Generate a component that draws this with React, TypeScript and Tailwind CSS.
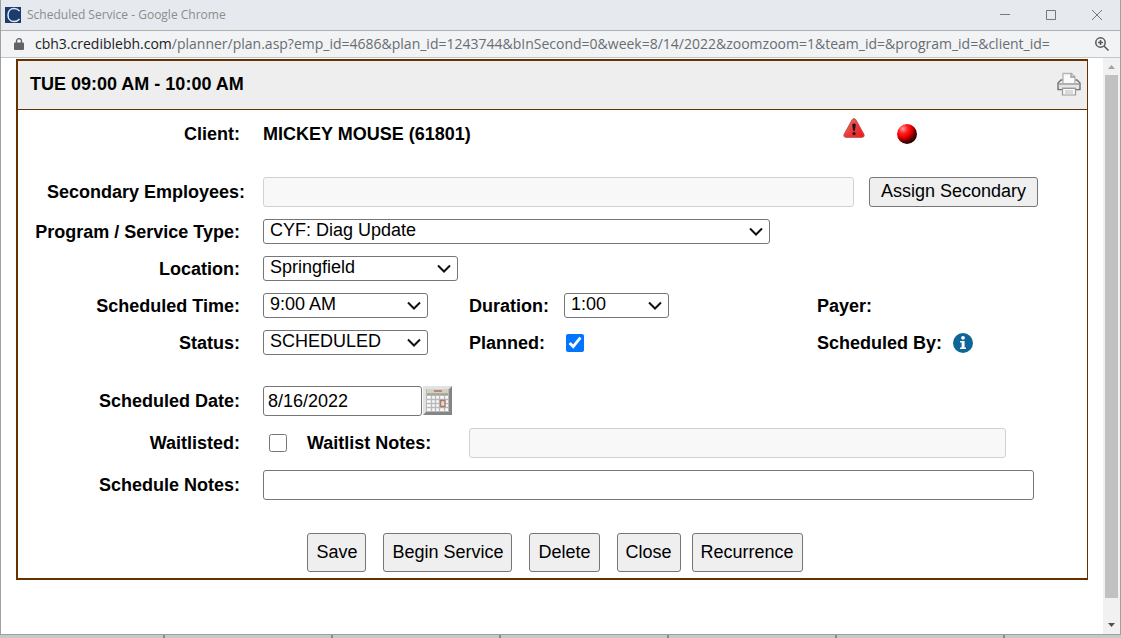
import { useState } from "react";
import type { ReactNode } from "react";

const TIMES = ["8:00 AM", "8:30 AM", "9:00 AM", "9:30 AM", "10:00 AM"];
const DURATIONS = ["0:30", "1:00", "1:30", "2:00"];
const STATUSES = ["SCHEDULED", "CANCELLED", "COMPLETED"];
const ACTIONS = [
  { label: "Save", className: "mr-[17px]" },
  { label: "Begin Service", className: "mr-[17px]" },
  { label: "Delete", className: "mr-[17px]" },
  { label: "Close", className: "mr-[11px]" },
  { label: "Recurrence", className: "" },
];

const fieldClass = "h-[30px] min-w-0 rounded-[3px] border border-[#767676] bg-white px-1 text-lg";
const disabledFieldClass = "h-[30px] min-w-0 rounded-[3px] border border-[#d1d1d1] bg-[#f8f8f8] px-1 text-lg";
const buttonClass = "rounded-[3px] border border-[#767676] bg-[#efefef] px-2 pb-0.5 text-lg leading-6 whitespace-nowrap";

function Row({ label, htmlFor, wide, children }: { label: string; htmlFor?: string; wide?: boolean; children?: ReactNode }) {
  return (
    <div className="flex items-center">
      <label
        htmlFor={htmlFor}
        className={`w-[245px] shrink-0 text-right font-bold leading-6 whitespace-nowrap ${wide ? "pr-[18px]" : "pr-[23px]"}`}
      >
        {label}
      </label>
      <div className="flex min-w-0 flex-1 items-center">{children}</div>
    </div>
  );
}

function Select({ id, value, options, className }: { id: string; value: string; options: string[]; className: string }) {
  const [current, setCurrent] = useState(value);
  return (
    <div className={`relative ${className}`}>
      <select
        id={id}
        value={current}
        onChange={(e) => setCurrent(e.target.value)}
        className="block h-[25px] w-full appearance-none rounded-[3px] border border-[#767676] bg-white pr-6 pb-0.5 pl-1.5 text-lg leading-[21px]"
      >
        {options.map((o) => (
          <option key={o}>{o}</option>
        ))}
      </select>
      <svg className="pointer-events-none absolute top-2 right-[7px]" width="14" height="10" viewBox="0 0 14 10" fill="none" stroke="#111" strokeWidth="2">
        <path d="M1 1.5 7 7.5 13 1.5" />
      </svg>
    </div>
  );
}

function PrintIcon() {
  return (
    <svg width="24" height="24" viewBox="0 0 24 24" fill="none">
      <path d="M6 11V1.5h8.5L18 5v6" fill="#fafafa" stroke="#b5b5b5" strokeWidth="1.3" />
      <path d="M14 1.5V5h4" stroke="#999" strokeWidth="1.3" />
      <path d="M5.5 8H4L1 11v6.5h4M18.5 8H20l3 3v6.5h-4" stroke="#707070" strokeWidth="1.4" />
      <path d="M2 12h20" stroke="#9a9a9a" strokeWidth="1.5" />
      <path d="M2 13h20v4H2z" fill="#e6e6e6" />
      <path d="M5 16.5h14" stroke="#666" strokeWidth="1.5" />
      <path d="M5.5 16.5h13V23h-13z" fill="#fafafa" stroke="#999" strokeWidth="1.2" />
      <path d="M8 19h8M8 21h8" stroke="#bbb" />
    </svg>
  );
}

function AlertIcon() {
  return (
    <svg width="22" height="20" viewBox="0 0 22 20">
      <defs>
        <linearGradient id="alert" x1="0" y1="0" x2="1" y2="1">
          <stop offset="0" stopColor="#e98383" />
          <stop offset="0.5" stopColor="#ee3b3b" />
          <stop offset="1" stopColor="#f01414" />
        </linearGradient>
      </defs>
      <path d="M9.3 1.5Q11-.4 12.7 1.5L21 16.5Q21.8 19.3 19 19.3H3Q.2 19.3 1 16.5Z" fill="url(#alert)" stroke="#c74747" />
      <path d="M9.2 6.2Q11 5 12.8 6.2L11.9 12.8h-1.8Z" fill="#161616" />
      <circle cx="11" cy="15.6" r="1.6" fill="#161616" />
    </svg>
  );
}

function RedBall() {
  return (
    <svg width="20" height="20" viewBox="0 0 20 20">
      <defs>
        <radialGradient id="ball" cx="0.3" cy="0.24" r="0.8">
          <stop offset="0" stopColor="#ff9a9a" />
          <stop offset="0.3" stopColor="#ff2020" />
          <stop offset="0.52" stopColor="#f00000" />
          <stop offset="0.78" stopColor="#6a0000" />
          <stop offset="1" stopColor="#200000" />
        </radialGradient>
      </defs>
      <circle cx="10" cy="10" r="10" fill="url(#ball)" />
    </svg>
  );
}

function InfoIcon() {
  return (
    <svg width="20" height="20" viewBox="0 0 20 20">
      <circle cx="10" cy="10" r="10" fill="#0e6598" />
      <circle cx="10" cy="4.8" r="1.9" fill="#fff" />
      <path d="M7 8h4.6v6.4H13V16H7v-1.6h1.6V9.5H7Z" fill="#fff" />
    </svg>
  );
}

function CalendarIcon() {
  return (
    <svg width="29" height="29" viewBox="0 0 29 29">
      <path d="M0 0h29v29H0z" fill="#858585" />
      <path d="M0 0h29l-3 3v23H3l-3 3z" fill="#e2e2e2" />
      <path d="M3 3h23v23H3z" fill="#b9b9b9" />
      <path d="M4 3h21v5H4z" fill="#d3d0c2" />
      <path d="M11 4h8v2h-8z" fill="#b48c75" />
      <path d="M4 8h21" stroke="#8b8b83" />
      <path d="M4 10h21v15H4z" fill="#fafafa" />
      <path d="M8.5 9v17M12.5 9v17M16.5 9v17M21.5 9v17M4 13.5h21M4 17.5h21M4 21.5h21" stroke="#b9b9b9" strokeWidth="1.4" />
      <path d="M17.5 14.5H22v6h-4.5z" fill="#ddd" stroke="#b07a60" strokeWidth="1.4" />
    </svg>
  );
}

function TitleBar() {
  return (
    <div className="flex h-[31px] items-center border-b border-[#b0b0b0] bg-[#e6e9ed] pl-1 text-[#8b8d90]">
      <svg width="16" height="16" viewBox="0 0 16 16">
        <path d="M0 0h16v16H0z" fill="#1c3c70" />
        <path d="M14.5 4Q12.5 1.500 9 1.5C5 1.5 3 4.5 3 8s2 6.5 6 6.5q3.5 0 5.5-2.500" fill="none" stroke="#dfe7f2" strokeWidth="1.5" />
      </svg>
      <span className="flex-1 pl-1.5 text-xs">Scheduled Service - Google Chrome</span>
      <div className="flex gap-9 pr-[18px]">
        <button type="button" aria-label="Minimize">
          <svg width="10" height="10" viewBox="0 0 10 10" stroke="#777"><path d="M0 4.500h10" /></svg>
        </button>
        <button type="button" aria-label="Maximize">
          <svg width="10" height="10" viewBox="0 0 10 10" fill="none" stroke="#777"><path d="M.5.5h9v9h-9z" /></svg>
        </button>
        <button type="button" aria-label="Close window">
          <svg width="10" height="10" viewBox="0 0 10 10" stroke="#777"><path d="m0 0 10 10M10 0 0 10" /></svg>
        </button>
      </div>
    </div>
  );
}

function AddressBar() {
  return (
    <div className="flex h-[27px] items-center border-b border-[#c4c6c9] bg-[#f1f3f5] pr-[11px] pl-[13px]">
      <svg width="10" height="12" viewBox="0 0 10 12" className="shrink-0">
        <path d="M1 4.500h8q1 0 1 1V11q0 1-1 1H1q-1 0-1-1V5.500q0-1 1-1" fill="#5f6368" />
        <path d="M2.500 5V3a2.500 2.300 0 0 1 5 0v2" fill="none" stroke="#5f6368" strokeWidth="1.3" />
      </svg>
      <span className="min-w-0 flex-1 overflow-hidden pl-[11px] text-sm whitespace-nowrap text-[#6a6d71]">
        <span className="text-[#202124]">cbh3.crediblebh.com</span>
        /planner/plan.asp?emp_id=4686&amp;plan_id=1243744&amp;bInSecond=0&amp;week=8/14/2022&amp;zoomzoom=1&amp;team_id=&amp;program_id=&amp;client_id=
      </span>
      <button type="button" aria-label="Zoom">
        <svg width="14" height="14" viewBox="0 0 14 14" fill="none" stroke="#55585c" strokeWidth="1.5">
          <circle cx="5.500" cy="5.500" r="4.700" />
          <path d="m9 9 4.500 4.500M3 5.500h5M5.500 3v5" />
        </svg>
      </button>
    </div>
  );
}

function ScrollBar() {
  return (
    <div className="flex w-[17px] shrink-0 flex-col items-center bg-[#f1f1f1]">
      <svg width="17" height="17" viewBox="0 0 17 17"><path d="m5 11 3.500-4L12 11z" fill="#a3a3a3" /></svg>
      <div className="w-[13px] flex-1 bg-[#c1c1c1]" />
      <div className="h-[19px]" />
      <svg width="17" height="17" viewBox="0 0 17 17"><path d="m5 6 3.500 4L12 6z" fill="#505050" /></svg>
    </div>
  );
}

function ScheduleForm() {
  const [planned, setPlanned] = useState(true);
  const [waitlisted, setWaitlisted] = useState(false);
  const [date, setDate] = useState("8/16/2022");
  const [notes, setNotes] = useState("");

  return (
    <form
      onSubmit={(e) => e.preventDefault()}
      className="border-2 border-r border-[#663300] pb-1.5 font-['Liberation_Sans',Arial,sans-serif] text-lg text-black"
    >
      <div className="flex h-[49px] items-center justify-between border-b border-[#663300] bg-[#eee] pr-1.5 pb-0.5 pl-3">
        <h1 className="font-bold">TUE 09:00 AM - 10:00 AM</h1>
        <button type="button" aria-label="Print"><PrintIcon /></button>
      </div>

      <div className="flex flex-col gap-3 pt-2">
        <Row label="Client:">
          <span className="font-bold">MICKEY MOUSE (61801)</span>
          <div className="ml-auto flex h-8 items-center gap-8 pr-[170px]">
            <span className="self-start"><AlertIcon /></span>
            <RedBall />
          </div>
        </Row>

        <div className="pt-[15px]">
          <Row label="Secondary Employees:" htmlFor="secondary" wide>
            <input id="secondary" disabled className={`${disabledFieldClass} flex-1`} />
            <button type="button" className={`${buttonClass} mr-[49px] ml-[15px] h-[30px] w-[169px]`}>
              Assign Secondary
            </button>
          </Row>
        </div>

        <Row label="Program / Service Type:" htmlFor="program">
          <Select id="program" value="CYF: Diag Update" options={["CYF: Diag Update"]} className="w-full max-w-[507px]" />
        </Row>
        <Row label="Location:" htmlFor="location">
          <Select id="location" value="Springfield" options={["Springfield"]} className="w-[195px]" />
        </Row>

        <Row label="Scheduled Time:" htmlFor="time">
          <Select id="time" value="9:00 AM" options={TIMES} className="w-[165px]" />
          <label htmlFor="duration" className="ml-[41px] w-[95px] font-bold leading-6">Duration:</label>
          <Select id="duration" value="1:00" options={DURATIONS} className="w-[105px]" />
          <div className="ml-auto w-[270px] font-bold leading-6">Payer:</div>
        </Row>
        <Row label="Status:" htmlFor="status">
          <Select id="status" value="SCHEDULED" options={STATUSES} className="w-[165px]" />
          <label htmlFor="planned" className="ml-[41px] w-[97px] font-bold leading-6">Planned:</label>
          <input
            id="planned"
            type="checkbox"
            checked={planned}
            onChange={(e) => setPlanned(e.target.checked)}
            className="size-[18px] accent-[#0075ff]"
          />
          <div className="ml-auto flex w-[270px] items-center gap-[11px] font-bold leading-6">
            Scheduled By:
            <button type="button" aria-label="Scheduled by details"><InfoIcon /></button>
          </div>
        </Row>

        <div className="pt-[19px]">
          <Row label="Scheduled Date:" htmlFor="date">
            <input id="date" value={date} onChange={(e) => setDate(e.target.value)} className={`${fieldClass} w-[159px]`} />
            <button type="button" aria-label="Pick a date" className="ml-px self-start"><CalendarIcon /></button>
          </Row>
        </div>
        <Row label="Waitlisted:" htmlFor="waitlisted">
          <input
            id="waitlisted"
            type="checkbox"
            checked={waitlisted}
            onChange={(e) => setWaitlisted(e.target.checked)}
            className="ml-1.5 size-[18px]"
          />
          <label htmlFor="waitlist-notes" className="ml-5 w-[162px] font-bold leading-6">Waitlist Notes:</label>
          <input id="waitlist-notes" disabled className={`${disabledFieldClass} mr-[81px] flex-1`} />
        </Row>
        <Row label="Schedule Notes:" htmlFor="notes">
          <input id="notes" value={notes} onChange={(e) => setNotes(e.target.value)} className={`${fieldClass} mr-[53px] flex-1`} />
        </Row>

        <div className="flex justify-center pt-[21px] pl-[5px]">
          {ACTIONS.map((a) => (
            <button key={a.label} type="button" className={`${buttonClass} h-[39px] ${a.className}`}>
              {a.label}
            </button>
          ))}
        </div>
      </div>
    </form>
  );
}

export default function App() {
  return (
    <div className="flex min-h-screen flex-col bg-[#c8c8c8] font-['Open_Sans','Noto_Sans',sans-serif]">
      <div className="flex flex-1 flex-col border-x border-b border-[#a0a0a0] bg-white">
        <TitleBar />
        <AddressBar />
        <div className="flex flex-1">
          <main className="min-w-0 flex-1 px-[15px] pt-px">
            <ScheduleForm />
          </main>
          <ScrollBar />
        </div>
      </div>
      <div className="flex h-[3px] gap-[166px] pl-[163px]">
        {[1, 2, 3, 4, 5, 6].map((n) => (
          <div key={n} className="w-0.5 shrink-0 bg-[#8c8c8c]" />
        ))}
      </div>
    </div>
  );
}
